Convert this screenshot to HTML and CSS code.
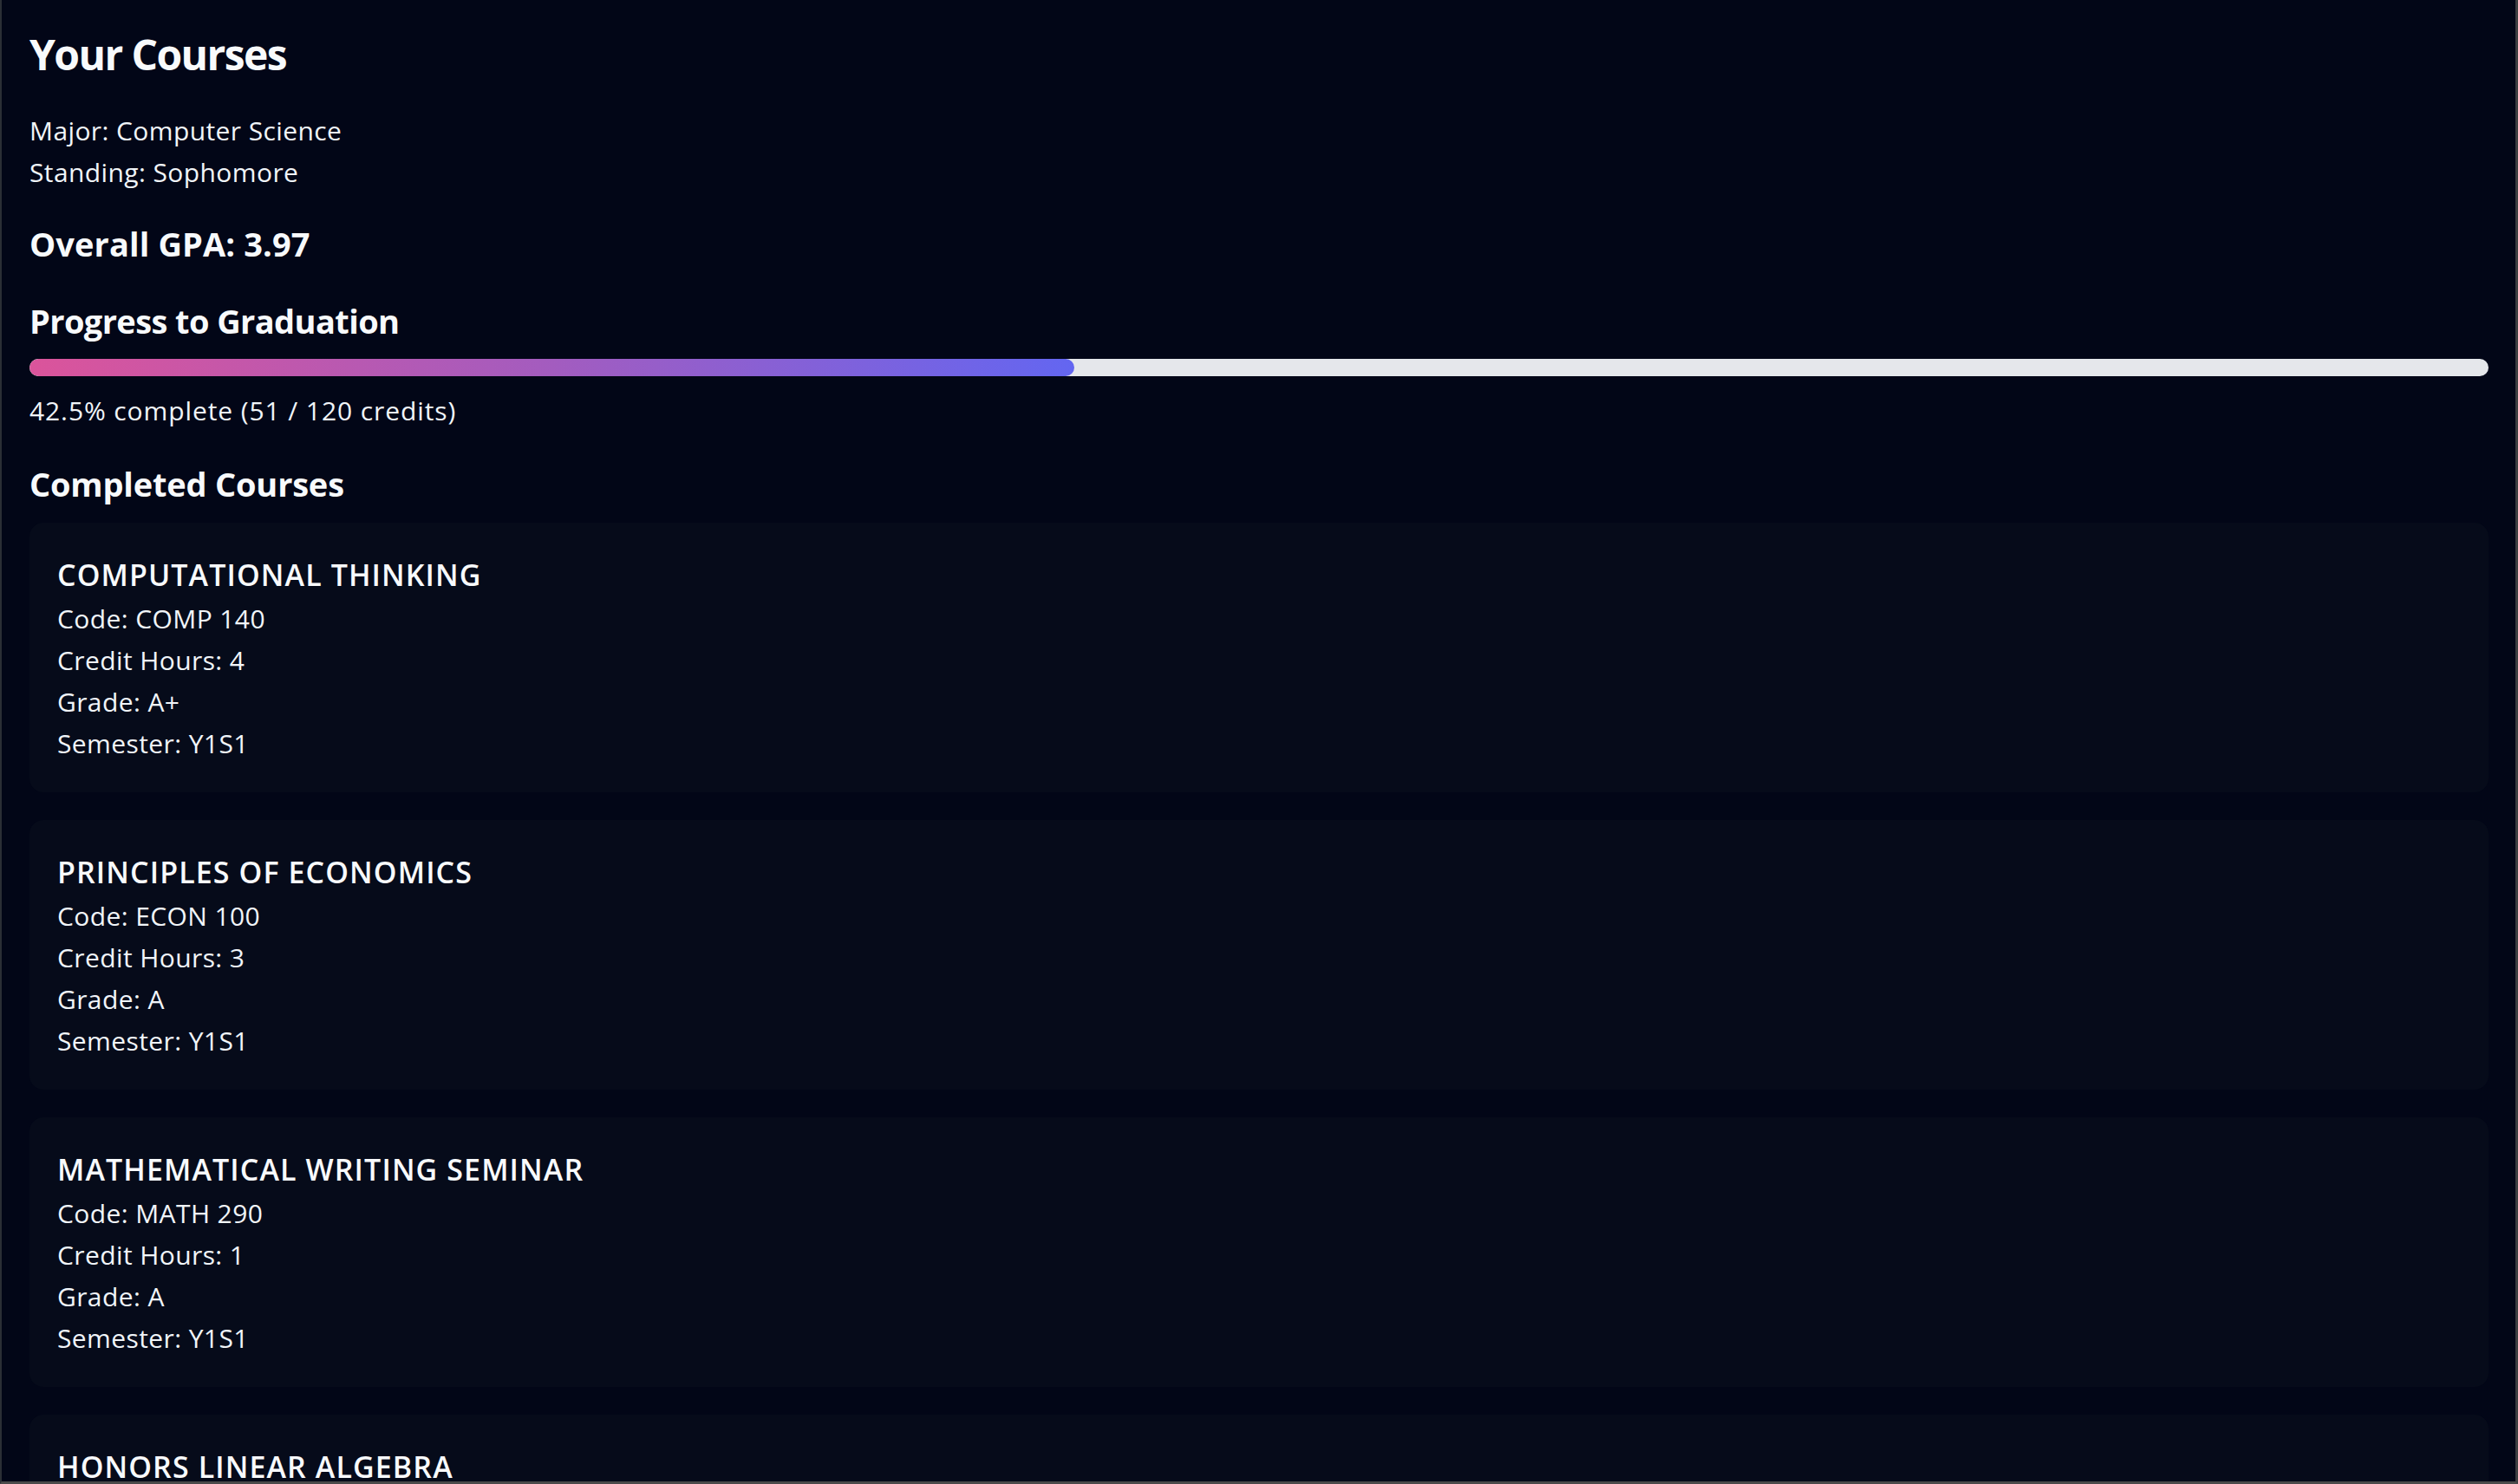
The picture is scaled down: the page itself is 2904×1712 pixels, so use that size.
FILE: index.html
```html
<!DOCTYPE html>
<html lang="en">
<head>
<meta charset="utf-8">
<title>Your Courses</title>
<link rel="stylesheet" href="styles.css">
</head>
<body>
<div class="frame"></div>
<main class="page">
  <h1 class="title">Your Courses</h1>
  <div class="info">
    <p>Major: Computer Science</p>
    <p>Standing: Sophomore</p>
  </div>
  <h2 class="section-title gpa">Overall GPA: 3.97</h2>
  <h2 class="section-title progress-title">Progress to Graduation</h2>
  <div class="track"><div class="fill" style="width: 42.5%"></div></div>
  <p class="progress-text">42.5% complete (51 / 120 credits)</p>
  <h3 class="section-title completed-title">Completed Courses</h3>
  <div class="cards">
    <section class="card">
      <h4 class="card-title">Computational Thinking</h4>
      <p>Code: COMP 140</p>
      <p>Credit Hours: 4</p>
      <p>Grade: A+</p>
      <p>Semester: Y1S1</p>
    </section>
    <section class="card">
      <h4 class="card-title">Principles of Economics</h4>
      <p>Code: ECON 100</p>
      <p>Credit Hours: 3</p>
      <p>Grade: A</p>
      <p>Semester: Y1S1</p>
    </section>
    <section class="card">
      <h4 class="card-title">Mathematical Writing Seminar</h4>
      <p>Code: MATH 290</p>
      <p>Credit Hours: 1</p>
      <p>Grade: A</p>
      <p>Semester: Y1S1</p>
    </section>
    <section class="card">
      <h4 class="card-title">Honors Linear Algebra</h4>
      <p>Code: MATH 354</p>
      <p>Credit Hours: 4</p>
      <p>Grade: A</p>
      <p>Semester: Y1S2</p>
    </section>
  </div>
</main>
</body>
</html>
```

FILE: styles.css
```css
html {
  scrollbar-width: none;
  background: #020617;
}
html::-webkit-scrollbar { display: none; }

body {
  margin: 0;
  background: #020617;
  color: #f1f5f9;
  font-family: "Open Sans", "Noto Sans", sans-serif;
  font-size: 30px;
  line-height: 48px;
  letter-spacing: 0.4px;
}

.frame {
  position: fixed;
  inset: 0;
  border-left: 2px solid #2b2f35;
  border-right: 3px solid #3d3f42;
  border-bottom: 3px solid #4a4a4a;
  pointer-events: none;
  z-index: 10;
}

.page {
  padding: 32px 34px 40px 34px;
}

p { margin: 0; }

.title {
  margin: 0;
  font-size: 48px;
  line-height: 62px;
  font-weight: 700;
  letter-spacing: -1.6px;
  color: #f8fafc;
}

.info {
  margin-top: 33px;
}

.section-title {
  margin: 0;
  font-size: 38px;
  line-height: 48px;
  font-weight: 700;
  color: #f8fafc;
}

.gpa {
  margin-top: 34px;
  letter-spacing: 0.1px;
}

.progress-title {
  margin-top: 41px;
  letter-spacing: -0.6px;
}

.track {
  margin-top: 20px;
  height: 20px;
  border-radius: 10px;
  background: #e5e7eb;
  overflow: hidden;
}

.fill {
  height: 100%;
  border-radius: 10px;
  background: linear-gradient(90deg, #db549b 0%, #a35cbf 50%, #6366f1 100%);
}

.progress-text {
  margin-top: 16px;
  letter-spacing: 0.9px;
}

.completed-title {
  margin-top: 36px;
  letter-spacing: -0.2px;
}

.cards {
  margin-top: 21px;
  display: flex;
  flex-direction: column;
  gap: 32px;
}

.card {
  background: #060b1a;
  border-radius: 16px;
  padding: 32px;
}

.card-title {
  margin: 0 0 -1px;
  font-size: 34px;
  line-height: 56px;
  font-weight: 650;
  letter-spacing: 1.1px;
  text-transform: uppercase;
  color: #f8fafc;
}
```
